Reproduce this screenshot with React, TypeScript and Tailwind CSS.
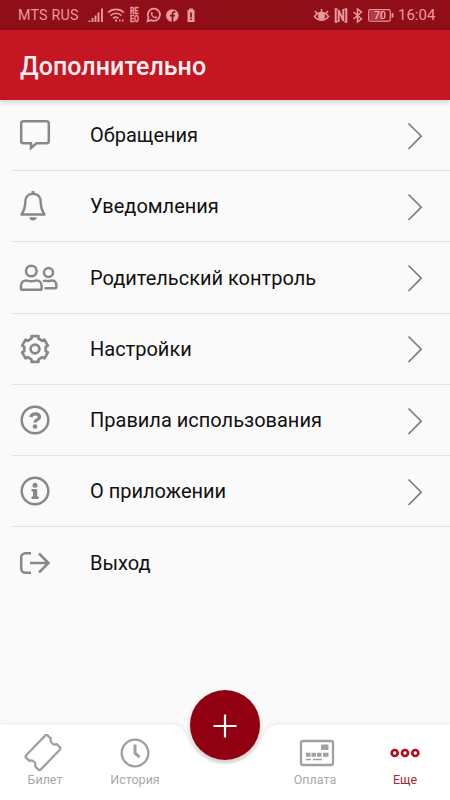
import React from "react";

const FONT = "font-[Roboto,'Noto_Sans',sans-serif]";

function polar(r: number, deg: number) {
  const a = (deg * Math.PI) / 180;
  return `${(35 + r * Math.sin(a)).toFixed(2)} ${(35 - r * Math.cos(a)).toFixed(2)}`;
}

// Six-toothed gear outline centred on 35,35
const gear =
  "M" +
  [0, 60, 120, 180, 240, 300]
    .map((t) => [polar(10.9, t - 19), polar(13.3, t - 15), polar(13.3, t + 15), polar(10.9, t + 19)].join("L"))
    .join("L") +
  "Z";

const icons: Record<string, React.ReactNode> = {
  chat: <path d="M23.500 21.200h23a2.300 2.300 0 0 1 2.300 2.300v17.400a2.300 2.300 0 0 1-2.300 2.300h-10L31 48v-4.800h-7.500a2.300 2.300 0 0 1-2.300-2.300V23.500a2.300 2.300 0 0 1 2.300-2.300z" />,
  bell: (
    <>
      <path d="M33 22.800c-5 0-7.700 3.500-7.700 8 0 6-1.100 8.700-3.800 12.700h23c-2.700-4-3.800-6.700-3.800-12.700 0-4.500-2.700-8-7.700-8z" strokeLinejoin="round" />
      <path d="M33 23v-3" strokeWidth="3" />
      <path d="M29.300 46.300h7.400c-.3 2-1.600 3.300-3.700 3.300s-3.400-1.300-3.700-3.300z" fill="#888" stroke="none" />
    </>
  ),
  people: (
    <>
      <circle cx="31.300" cy="28" r="5.300" />
      <circle cx="48.500" cy="29.500" r="4.500" />
      <path d="M26 37.500c2 0 2.600.8 5.300.8s3.300-.8 5.300-.8c3 0 5 2.500 5 5.500v2.200c0 1-.8 1.600-1.600 1.600H22.600c-.9 0-1.600-.7-1.600-1.600V43c0-3 2-5.500 5-5.500z" />
      <path d="M43 38.300c1.300-.9 2.200-.3 5.400-.3 2 0 2-.5 4-.5 2.500 0 4 2.200 4 4.800v1.500c0 .8-.6 1.400-1.400 1.400H44.500" />
    </>
  ),
  gear: (
    <>
      <path d={gear} strokeLinejoin="round" strokeWidth="2.700" />
      <circle cx="35" cy="35" r="4.400" strokeWidth="2.700" />
    </>
  ),
  help: (
    <>
      <circle cx="35" cy="35" r="13.300" />
      <path d="M30.800 32.200c.6-2.300 2-3.300 4.400-3.300 2.500 0 4.300 1.300 4.300 3.300 0 2.600-4.500 2.400-4.500 5.300" strokeWidth="3.300" />
      <circle cx="35" cy="41.500" r="2.300" fill="#888" stroke="none" />
    </>
  ),
  info: (
    <>
      <circle cx="35" cy="35" r="13.300" />
      <circle cx="35" cy="29.200" r="2.500" fill="#888" stroke="none" />
      <path d="M31.500 33h5.700v7.500h1.500v2.500h-7.200v-2.500h1.500v-5h-1.500z" fill="#888" stroke="none" />
    </>
  ),
  exit: <path d="M31 25.200h-5.500a4.300 4.300 0 0 0-4.300 4.300v11a4.300 4.300 0 0 0 4.300 4.300H31M30 35h18.500M39 25.500l9.500 9.500-9.500 9.500" />,
};

const rows: [string, string][] = [
  ["chat", "Обращения"],
  ["bell", "Уведомления"],
  ["people", "Родительский контроль"],
  ["gear", "Настройки"],
  ["help", "Правила использования"],
  ["info", "О приложении"],
  ["exit", "Выход"],
];

function StatusLeft() {
  return (
    <svg className="ml-[9px] h-[30px] w-[112px]" viewBox="88 0 112 30" fill="none" stroke="#eb9a9e" strokeWidth="1.700">
      <path d="M89.500 22v-1.500M92.500 22v-4M95.500 22v-6.500M98.500 22v-9.500M102 22V8.500" strokeWidth="1.900" />
      <path d="M108 12.500c4.500-4.300 11.500-4.300 16 0M110.500 15.500c3-3 8-3 11 0M113 18.300c1.800-1.500 4-1.500 5.500 0" />
      <path d="M115 20.500h2M119 20.500h1.500M122 20.500h1.500" strokeWidth="2" />
      <text transform="translate(130 0) scale(.82 1)" fill="#eb9a9e" stroke="#eb9a9e" strokeWidth=".3" fontFamily="Roboto, sans-serif" fontWeight="700" fontSize="8.800">
        <tspan x="0" y="14.500">RE</tspan>
        <tspan x="0" y="21.700">EO</tspan>
      </text>
      <path d="M147.500 21.200l1-3.600a6.100 6.100 0 1 1 2.500 2.500z" />
      <path d="M151.200 12.300c.8-.7 1.200-.3 1.700 1.200l-.7 1c.6 1.300 1.400 2 2.700 2.600l1-.9c1.600.7 1.700 1 .8 1.900-2.200 1.800-7.300-3-5.500-5.800z" fill="#eb9a9e" stroke="none" />
      <circle cx="172.300" cy="15.500" r="6.300" fill="#eb9a9e" stroke="none" />
      <path d="M172.500 22v-8c0-1.500.8-2.200 2.800-2.100M170 15.700h5" stroke="#8f0d18" strokeWidth="1.700" />
      <path d="M189 8.500h4V10h1.500v12h-7V10h1.500z" fill="#eb9a9e" stroke="none" />
      <path d="M191 12.500v5M191 18.500v1.500" stroke="#8f0d18" />
    </svg>
  );
}

function StatusRight() {
  return (
    <svg className="h-[30px] w-[84px]" viewBox="312 0 84 30" fill="none" stroke="#eb9a9e" strokeWidth="1.500">
      <path d="M314.500 16.500c4-5.300 10-5.300 14 0-4 5-10 5-14 0zM315 11l2 2.500M321.500 9v3M328 11l-2 2.500" />
      <circle cx="321.500" cy="16.300" r="2.700" fill="#eb9a9e" />
      <path d="M337.500 9.300h-1.800v12.400h1.800M344.500 9.300h1.800v12.400h-1.800" strokeWidth="2" />
      <path d="M338.700 22V10l4.600 11V9" strokeWidth="1.900" />
      <path d="M353.500 12l8 7-4 3V9l4 3-8 7" />
      <rect x="368.700" y="9.700" width="21.500" height="11.500" rx="1.500" strokeWidth="1.200" />
      <path d="M369.500 10.500h13v10h-13z" fill="#b33c46" stroke="none" />
      <path d="M392.500 13v4.500" strokeWidth="1.800" />
      <text x="374" y="19.400" fill="#f5b3b5" stroke="none" fontFamily="Roboto, sans-serif" fontSize="10.500" fontWeight="500">70</text>
    </svg>
  );
}

function Tab({ label, active, children }: { label: string; active?: boolean; children: React.ReactNode }) {
  return (
    <div className="flex w-[90px] flex-col items-center">
      <svg className="mt-[10px] h-[38px] w-[60px]" viewBox="-30 -19 60 38" fill="none" stroke={active ? "#b30c1c" : "#a0a0a0"} strokeWidth="2.300">
        {children}
      </svg>
      <span className={active ? "text-[12.500px] leading-[16px] text-[#a72533]" : "text-[12.500px] leading-[16px] text-[#a8a8a8]"}>{label}</span>
    </div>
  );
}

export default function App() {
  return (
    <div className={`${FONT} flex h-[800px] w-[450px] flex-col overflow-hidden bg-[#fafafa]`}>
      <div className="flex h-[30px] shrink-0 items-center bg-[#8f0e18] pl-[18px] text-[#eb9a9e]">
        <span className="w-[61px] whitespace-nowrap text-[14.300px] leading-[30px] tracking-[.2px]">MTS RUS</span>
        <StatusLeft />
        <div className="ml-auto flex items-center pr-[14px]">
          <StatusRight />
          <span className="ml-[2px] w-[38px] whitespace-nowrap text-[15px] leading-[31px]">16:04</span>
        </div>
      </div>
      <header className="z-10 flex h-[70px] shrink-0 items-center bg-[#c41623] pl-[20px] pt-[3px] shadow-[0_2px_5px_rgba(0,0,0,0.18)]">
        <h1 className="text-[25px] font-medium tracking-[.050px] text-[#ffeff0]">Дополнительно</h1>
      </header>
      <main className="flex-1">
        {rows.map(([icon, label], i) => (
          <div key={icon} className="flex h-[71.250px] items-center">
            <svg className="h-[71px] w-[90px] shrink-0" viewBox="0 0 90 71" fill="none" stroke="#888" strokeWidth="2.500">
              {icons[icon]}
              {i < 6 && <path d="M12 70.500h78" stroke="#e2e2e2" strokeWidth="1" />}
            </svg>
            <div className={i < 6 ? "flex h-[71px] flex-1 items-center border-b border-[#e2e2e2]" : "flex h-[71px] flex-1 items-center"}>
              <span className="text-[20px] text-[#111]">{label}</span>
              {i < 6 && (
                <svg className="ml-auto mr-[25px] mt-px h-[30px] w-[20px]" viewBox="0 0 20 30" fill="none" stroke="#7e7e7e" strokeWidth="1.700">
                  <path d="M3.500 2.500l12.700 12.700L3.500 28" />
                </svg>
              )}
            </div>
          </div>
        ))}
      </main>
      <footer className="relative h-[76px] shrink-0">
        <svg className="absolute -top-[40px] left-0 h-[116px] w-[450px]" viewBox="0 684 450 116">
          <path
            d="M0 724.500H171C181 725 184 730 188 739A40 40 0 0 0 262 739C266 730 269 725 279 724.500H450V800H0Z"
            fill="#fff"
            className="drop-shadow-[0_-1px_2px_rgba(0,0,0,0.07)]"
          />
          <circle cx="225" cy="725" r="35" fill="#910010" className="drop-shadow-[0_2px_2px_rgba(0,0,0,0.20)]" />
          <path d="M213.500 726h23M225 714.500v23" stroke="#fff" strokeWidth="2.200" />
        </svg>
        <div className="relative flex h-full">
          <Tab label="Билет">
            <path
              transform="translate(-2 -.5) rotate(-46)"
              d="M-14-10.200H14a1.500 1.500 0 0 1 1.500 1.500v4.700c-3.500 1.500-3.500 6.500 0 8v4.700a1.500 1.500 0 0 1-1.500 1.500H-14a1.500 1.500 0 0 1-1.500-1.500V4c3.500-1.500 3.500-6.500 0-8v-4.700a1.500 1.500 0 0 1 1.500-1.500z"
              strokeWidth="2.300"
              strokeLinejoin="round"
            />
          </Tab>
          <Tab label="История">
            <circle cx="0" cy="0" r="13.300" />
            <path d="M0-8.500V0l4.500 4.200" strokeWidth="3" />
          </Tab>
          <div className="w-[90px]" />
          <Tab label="Оплата">
            <rect x="-14" y="-12" width="32" height="24" rx="2" />
            <g fill="#a0a0a0" stroke="none">
              <rect x="6" y="-8.500" width="7.500" height="5.500" rx="1" />
              <path d="M-9-.300h4.500v4H-9zM-3.500-.300H1v4h-4.500zM2-.300h4.500v4H2zM8-.300h5.500v4H8zM-9 5.700h5v1.600h-5zM-2 5.700h9v1.600h-9z" />
            </g>
          </Tab>
          <Tab label="Еще" active>
            <g strokeWidth="2.700">
              <circle cx="-10.300" cy="0" r="3" />
              <circle cx="0" cy="0" r="3" />
              <circle cx="10.300" cy="0" r="3" />
            </g>
          </Tab>
        </div>
      </footer>
    </div>
  );
}
